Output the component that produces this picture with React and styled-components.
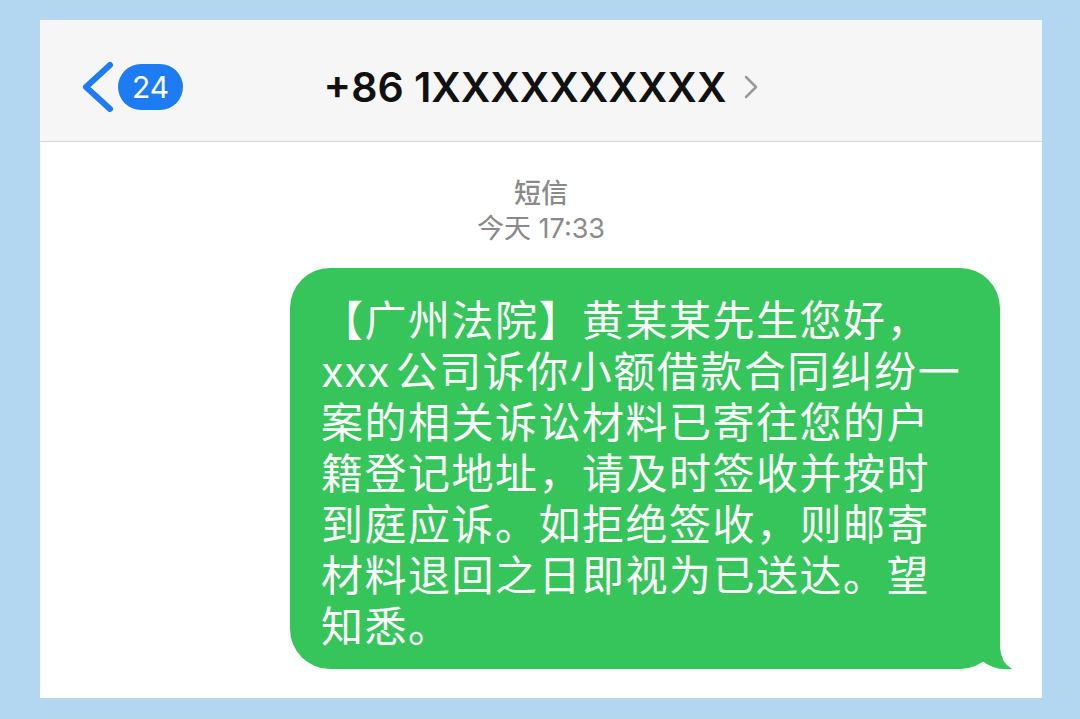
import React from "react";
import styled, { createGlobalStyle } from "styled-components";

const GlobalStyle = createGlobalStyle`
    * {
        box-sizing: border-box;
    }
    body {
        margin: 0;
        background-color: #b4d7f1;
        font-family: "Inter", "Noto Sans CJK SC", sans-serif;
    }
`;

const Page = styled.div`
    width: 1080px;
    height: 719px;
    padding: 20px 38px 21px 40px;
`;

const Panel = styled.div`
    display: flex;
    flex-direction: column;
    height: 100%;
    background-color: #fff;
`;

const Header = styled.div`
    display: grid;
    grid-template-columns: 1fr auto 1fr;
    align-items: center;
    height: 122px;
    padding: 13px 40px 0 40px;
    background-color: #f6f6f6;
    border-bottom: 1px solid #d4d4d4;
`;

const Back = styled.div`
    display: flex;
    align-items: center;
    gap: 2px;
    justify-self: start;
`;

const Badge = styled.span`
    display: flex;
    align-items: center;
    justify-content: center;
    width: 65px;
    height: 46px;
    border-radius: 23px;
    background-color: #1d7cf2;
    color: #fff;
    font-size: 30px;
`;

const Title = styled.div`
    display: flex;
    align-items: center;
    gap: 18px;
    color: #111;
    font-size: 41px;
    font-weight: 600;
`;

const Body = styled.div`
    display: flex;
    flex-direction: column;
    padding: 34px 42px 0 0;
`;

const Stamp = styled.div`
    padding-left: 42px;
    text-align: center;
    color: #8a8a8a;
    font-size: 27px;
    font-weight: ${(p) => (p.$strong ? 500 : 400)};
    line-height: 35px;
`;

const Row = styled.div`
    display: flex;
    justify-content: flex-end;
    margin-top: 22px;
`;

const Bubble = styled.div`
    position: relative;
    width: 710px;
    padding: 27px 20px 17px 31px;
    border-radius: 40px;
    background-color: #36c55a;
    color: #fff;
    font-size: 42px;
    letter-spacing: 1.5px;
`;

const Line = styled.div`
    height: 51px;
    line-height: 51px;
    white-space: nowrap;
`;

const Latin = styled.span`
    margin-right: 6px;
    letter-spacing: 0;
`;

const Tail = styled.svg`
    position: absolute;
    right: -14px;
    bottom: -2px;
`;

const lines = [
    "【广州法院】黄某某先生您好，",
    <>
        <Latin>xxx</Latin>公司诉你小额借款合同纠纷一
    </>,
    "案的相关诉讼材料已寄往您的户",
    "籍登记地址，请及时签收并按时",
    "到庭应诉。如拒绝签收，则邮寄",
    "材料退回之日即视为已送达。望",
    "知悉。",
];

const App = () => {
    return (
        <Page>
            <GlobalStyle />
            <Panel>
                <Header>
                    <Back>
                        <svg width="36" height="56" viewBox="0 0 36 56">
                            <polyline
                                points="30,6 6,28 30,50"
                                fill="none"
                                stroke="#1d7cf2"
                                strokeWidth="6"
                                strokeLinecap="round"
                                strokeLinejoin="round"
                            />
                        </svg>
                        <Badge>24</Badge>
                    </Back>
                    <Title>
                        +86 1XXXXXXXXXX
                        <svg width="14" height="24" viewBox="0 0 14 24">
                            <polyline
                                points="2,2 12,12 2,22"
                                fill="none"
                                stroke="#9a9a9a"
                                strokeWidth="2.5"
                                strokeLinecap="round"
                                strokeLinejoin="round"
                            />
                        </svg>
                    </Title>
                    <div />
                </Header>
                <Body>
                    <Stamp $strong>短信</Stamp>
                    <Stamp>今天 17:33</Stamp>
                    <Row>
                        <Bubble>
                            {lines.map((l, i) => (
                                <Line key={i}>{l}</Line>
                            ))}
                            <Tail width="66" height="52" viewBox="0 0 66 52">
                                <path
                                    d="M52,5 L52,28 Q53,44 64,50 Q46,52 33,41 Q23,49 5,50 L5,5 Z"
                                    fill="#36c55a"
                                />
                            </Tail>
                        </Bubble>
                    </Row>
                </Body>
            </Panel>
        </Page>
    );
};

export default App;
